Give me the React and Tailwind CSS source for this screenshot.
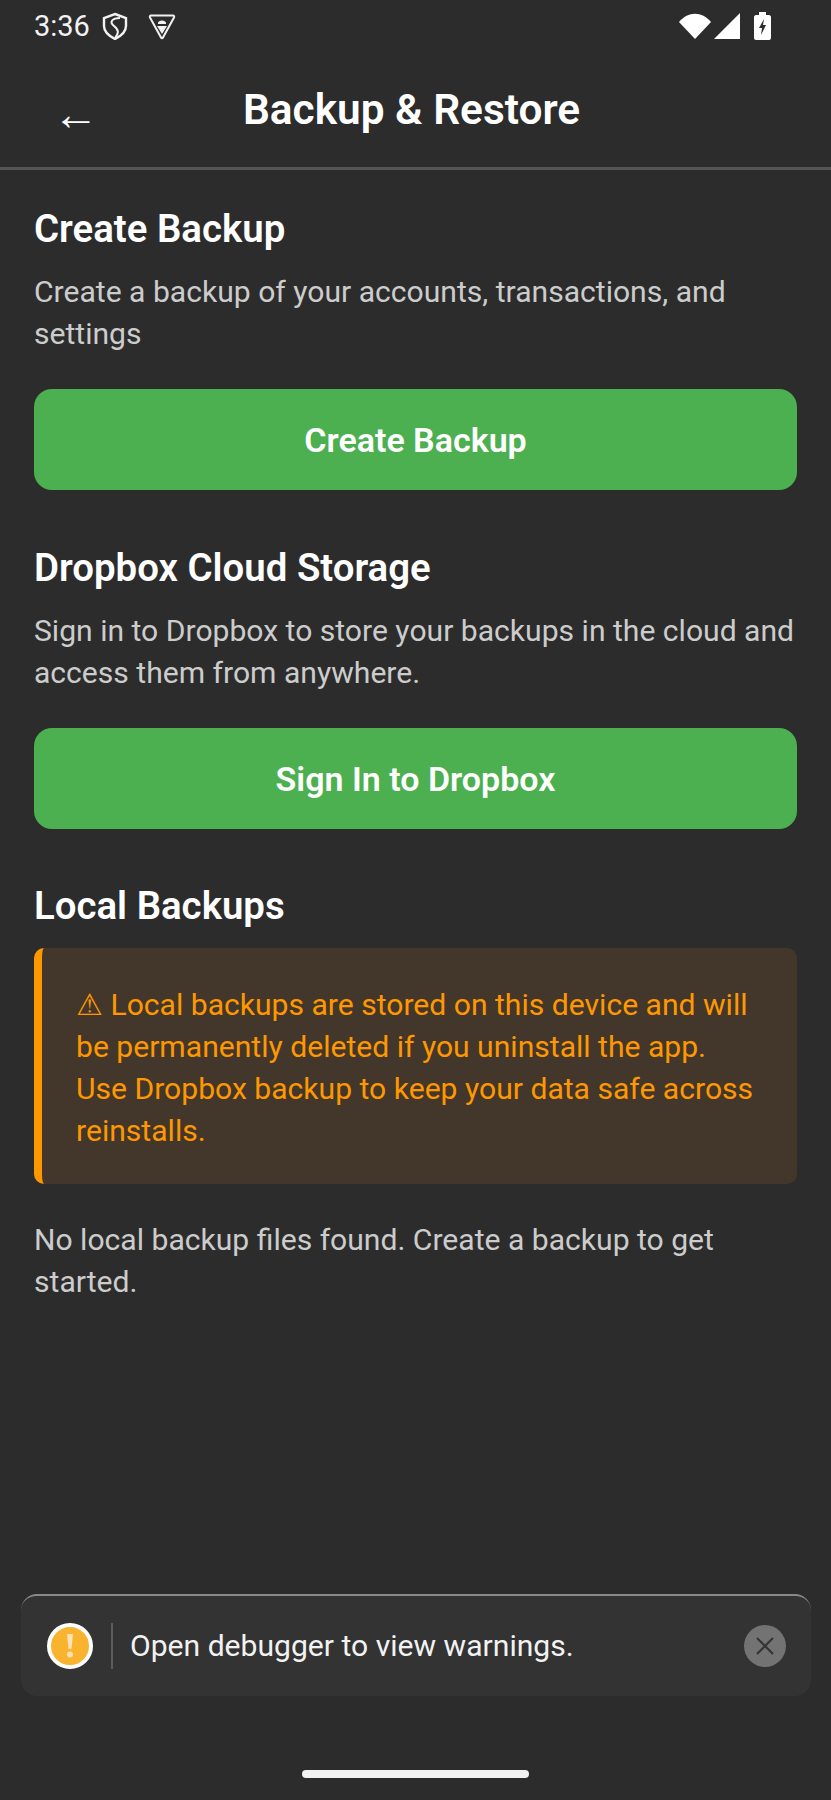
import React from 'react'

function StatusBar() {
    return (
        <div className="flex items-center justify-between h-[52px] pl-[34px] pr-[60px]">
            <div className="flex items-center">
                <span className="text-[29px] leading-[32px] text-[#f2f2f2]">3:36</span>
                <svg className="ml-[12px]" width="26" height="28" viewBox="0 0 26 28" fill="none" stroke="#f2f2f2" strokeWidth="2.4">
                    <path d="M13 2 L24 6 V14 C24 20 19 24 13 27 C7 24 2 20 2 14 V6 Z" />
                    <path d="M18 6 C10 6 7 10 12 14 C17 18 17 21 13 26" strokeWidth="2" />
                </svg>
                <svg className="ml-[20px]" width="28" height="27" viewBox="0 0 28 27" fill="none">
                    <path d="M3 2.5 H25 C26 2.5 26.5 3.5 26 4.5 L15 24.5 C14.5 25.5 13.5 25.5 13 24.5 L2 4.5 C1.5 3.5 2 2.5 3 2.5 Z" stroke="#f2f2f2" strokeWidth="2" />
                    <path d="M10 10 C10 6.500 18 6.500 18 10 V11 H10 Z M9 13 H19 L14 21 Z" fill="#f2f2f2" />
                </svg>
            </div>
            <div className="flex items-center">
                <svg width="32" height="26" viewBox="0 0 32 26" fill="#ffffff">
                    <path d="M0 9 C9 -2 23 -2 32 9 L16 26 Z" />
                </svg>
                <svg className="ml-[3px]" width="27" height="26" viewBox="0 0 27 26" fill="#ffffff">
                    <path d="M0 26 L26 0 V26 Z" />
                </svg>
                <svg className="ml-[13px]" width="17" height="28" viewBox="0 0 17 28">
                    <path d="M5 0 H12 V3 H15 C16 3 17 4 17 5 V26 C17 27 16 28 15 28 H2 C1 28 0 27 0 26 V5 C0 4 1 3 2 3 H5 Z" fill="#ffffff" />
                    <path d="M10 7 L5 16 H8 L7 23 L12 13 H9 Z" fill="#2c2c2c" />
                </svg>
            </div>
        </div>
    )
}

function Section({ title, text, button }) {
    return (
        <div className="mb-[54px]">
            <h2 className="text-[38.4px] leading-[48px] font-semibold text-white mb-[18px]">{title}</h2>
            <p className="text-[30.1px] leading-[42px] text-[#cccccc] mb-[34px]">{text}</p>
            <button className="w-full h-[101px] pt-[2px] rounded-[18px] bg-[#4caf50] text-white text-[34px] font-semibold">
                {button}
            </button>
        </div>
    )
}

export default function App() {
    return (
        <div className="relative h-[1800px] bg-[#2c2c2c] overflow-hidden font-['Roboto',sans-serif]">
            <StatusBar />

            <div className="relative flex items-center justify-center h-[118px] border-b-[3px] border-[#555555]">
                <span className="absolute left-[53px] top-[38px] text-[46px] leading-[48px] text-white">←</span>
                <h1 className="text-[42.4px] leading-[48px] font-semibold text-white -ml-[8px]">Backup & Restore</h1>
            </div>

            <div className="px-[34px] pt-[35px]">
                <Section
                    title="Create Backup"
                    text="Create a backup of your accounts, transactions, and settings"
                    button="Create Backup"
                />
                <Section
                    title="Dropbox Cloud Storage"
                    text="Sign in to Dropbox to store your backups in the cloud and access them from anywhere."
                    button="Sign In to Dropbox"
                />

                <h2 className="-mt-[1px] text-[38.4px] leading-[48px] font-semibold text-white mb-[18px]">Local Backups</h2>
                <div className="rounded-[10px] border-l-[8px] border-[#ff9800] bg-[#42372a] px-[34px] pt-[36px] pb-[32px] mb-[35px]">
                    <p className="text-[30.1px] leading-[42px] text-[#ff9800]">
                        ⚠ Local backups are stored on this device and will be permanently deleted if you uninstall the app. Use Dropbox backup to keep your data safe across reinstalls.
                    </p>
                </div>
                <p className="text-[30.1px] leading-[42px] text-[#cccccc]">No local backup files found. Create a backup to get started.</p>
            </div>

            {/* debugger toast sits over the page */}
            <div className="absolute left-[21px] right-[20px] top-[1594px] h-[102px] flex items-center rounded-[16px] bg-[#333333] border-t-2 border-[#8a8a8a] pl-[26px] pr-[25px]">
                <div className="flex items-center justify-center w-[46px] h-[46px] rounded-full bg-[#f9b32f] border-[4px] border-white shrink-0">
                    <svg width="8" height="24" viewBox="0 0 8 24" fill="#fbe3b4">
                        <path d="M1 0 H7 L5.5 15 H2.500 Z" />
                        <circle cx="4" cy="20.500" r="3" />
                    </svg>
                </div>
                <div className="w-[2px] h-[46px] bg-[#5c5c5c] ml-[18px] mr-[17px]"></div>
                <span className="flex-1 text-[30.1px] leading-[38px] text-[#f2f2f2]">Open debugger to view warnings.</span>
                <div className="flex items-center justify-center w-[42px] h-[42px] rounded-full bg-[#737373]">
                    <svg width="20" height="20" viewBox="0 0 20 20" stroke="#333333" strokeWidth="2" fill="none">
                        <path d="M2 2 L18 18 M18 2 L2 18" />
                    </svg>
                </div>
            </div>

            <div className="absolute left-[302px] top-[1770px] w-[227px] h-[8px] rounded-full bg-[#f2f2f2]"></div>
        </div>
    )
}
